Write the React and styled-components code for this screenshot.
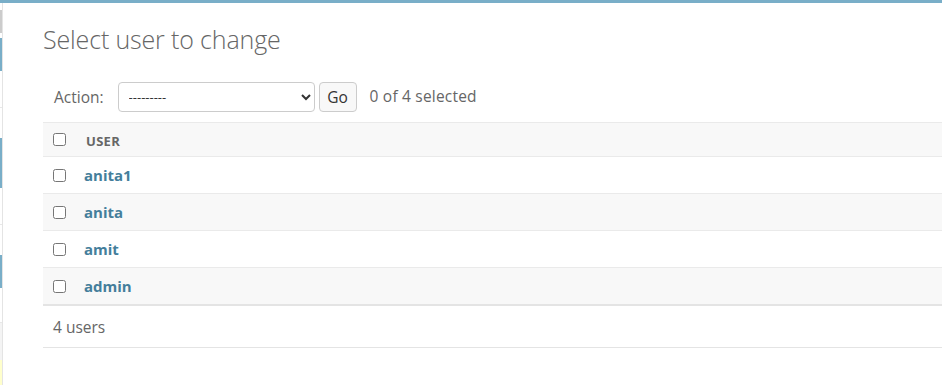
import React from "react";
import styled, { createGlobalStyle } from "styled-components";

const Global = createGlobalStyle`
  html, body { margin: 0; padding: 0; background: #fff; }
  body {
    font-family: "Open Sans", "DejaVu Sans", sans-serif;
    color: #333;
    font-size: 14px;
  }
`;

const Page = styled.div`
  border-top: 3px solid #79aec8;
  display: flex;
  min-height: 382px;
  overflow: hidden;
`;

const Sidebar = styled.nav`
  flex: 0 0 2px;
  border-right: 1px solid #e4e4e4;
  display: flex;
  flex-direction: column;
  padding-top: 7px;
`;

const SideBlock = styled.div`
  height: ${(p) => p.$h}px;
  background: ${(p) => p.$bg || "transparent"};
  border: ${(p) => (p.$box ? "1px solid #ccc" : "none")};
  border-bottom: ${(p) => (p.$line ? "1px solid #e8e8e8" : p.$box ? "1px solid #ccc" : "none")};
  box-sizing: border-box;
`;

const Main = styled.main`
  flex: 1;
  padding: 20px 0 0 40px;
  min-width: 0;
`;

const Title = styled.h1`
  margin: 0 0 26px 0;
  font-weight: 300;
  font-size: 25px;
  line-height: 33px;
  color: #666;
  letter-spacing: -0.15px;
`;

const Actions = styled.div`
  display: flex;
  align-items: center;
  gap: 4px;
  padding: 0 11px;
  height: 30px;
  margin-bottom: 10px;
  font-size: 15.5px;
  color: #666;
`;

const Label = styled.label`
  margin-right: 10px;
`;

const Select = styled.select`
  width: 197px;
  height: 30px;
  border: 1px solid #ccc;
  border-radius: 4px;
  background: #fff;
  font-family: inherit;
  font-size: 13px;
  color: #333;
  padding: 0 6px;
`;

const GoButton = styled.button`
  height: 30px;
  width: 38px;
  border: 1px solid #ccc;
  border-radius: 4px;
  background: #f8f8f8;
  font-family: inherit;
  font-size: 15.5px;
  color: #333;
  padding: 0;
`;

const Counter = styled.span`
  margin-left: 9px;
  line-height: 1;
  letter-spacing: 0.2px;
`;

const Table = styled.div`
  display: flex;
  flex-direction: column;
`;

const Row = styled.div`
  display: flex;
  align-items: center;
  height: ${(p) => (p.$header ? 33 : 36)}px;
  background: ${(p) => (p.$alt ? "#f8f8f8" : "#fff")};
  border-top: 1px solid #eaeaea;
  padding-left: 10px;
  border-bottom: ${(p) => (p.$last ? "2px solid #e4e4e4" : "none")};
`;

const Check = styled.input.attrs({ type: "checkbox" })`
  margin: 0;
  width: 13px;
  height: 13px;
`;

const HeadCell = styled.span`
  margin-left: 20px;
  margin-top: 3px;
  font-size: 13px;
  font-weight: 700;
  color: #666;
  letter-spacing: 0.3px;
`;

const UserLink = styled.a`
  margin-left: 18px;
  font-size: 15px;
  font-weight: 700;
  color: #447e9b;
  text-decoration: none;
`;

const Paginator = styled.p`
  margin: 0;
  height: 41px;
  display: flex;
  align-items: center;
  padding-left: 10px;
  border-bottom: 1px solid #e4e4e4;
  font-size: 15.5px;
  color: #666;
`;

const users = ["anita1", "anita", "amit", "admin"];

export default function App() {
  return (
    <>
      <Global />
      <Page>
        <Sidebar>
          <SideBlock $h={23} $box />
          <SideBlock $h={5} />
          <SideBlock $h={33} $bg="#79aec8" />
          <SideBlock $h={37} $line />
          <SideBlock $h={30} />
          <SideBlock $h={50} $bg="#79aec8" />
          <SideBlock $h={37} $line />
          <SideBlock $h={30} />
          <SideBlock $h={33} $bg="#79aec8" />
          <SideBlock $h={35} $line />
          <SideBlock $h={37} $bg="#f4f4f4" />
          <SideBlock $h={30} $bg="#ffffcc" />
        </Sidebar>
        <Main>
          <Title>Select user to change</Title>
          <Actions>
            <Label>Action:</Label>
            <Select defaultValue="">
              <option value="">---------</option>
              <option value="delete">Delete selected users</option>
            </Select>
            <GoButton>Go</GoButton>
            <Counter>0 of 4 selected</Counter>
          </Actions>
          <Table>
            <Row $header $alt>
              <Check />
              <HeadCell>USER</HeadCell>
            </Row>
            {users.map((u, i) => (
              <Row key={u} $alt={i % 2 === 1} $last={i === users.length - 1}>
                <Check />
                <UserLink href="#">{u}</UserLink>
              </Row>
            ))}
          </Table>
          <Paginator>4 users</Paginator>
        </Main>
      </Page>
    </>
  );
}
